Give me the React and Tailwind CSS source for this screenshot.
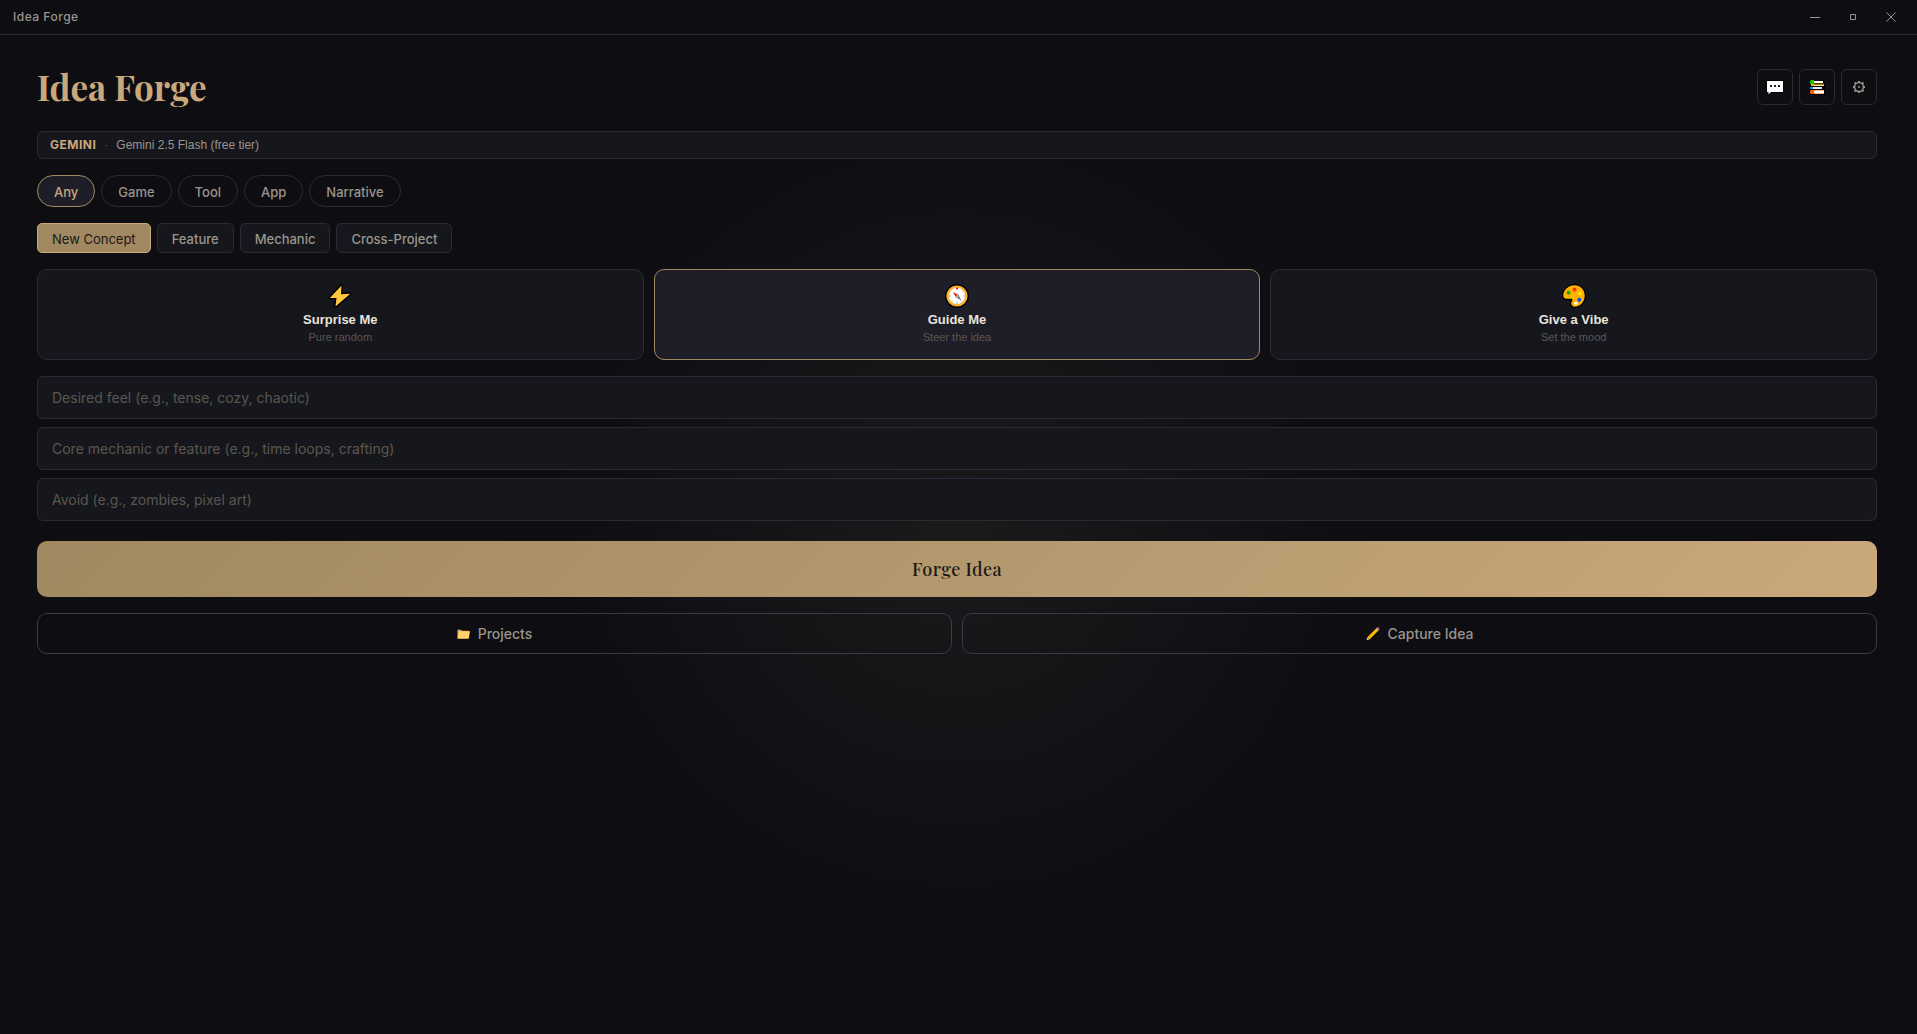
import { useState } from "react";

const CATEGORIES = ["Any", "Game", "Tool", "App", "Narrative"];
const IDEA_TYPES = ["New Concept", "Feature", "Mechanic", "Cross-Project"];

const FIELDS = [
  { id: "feel", placeholder: "Desired feel (e.g., tense, cozy, chaotic)" },
  { id: "mechanic", placeholder: "Core mechanic or feature (e.g., time loops, crafting)" },
  { id: "avoid", placeholder: "Avoid (e.g., zombies, pixel art)" },
];

function BoltIcon() {
  return (
    <svg width="24" height="24" viewBox="0 0 24 24" aria-hidden="true">
      <path
        d="M13.500 1.500 1.800 14H8.500L7.500 22.500 22.300 9.800 13 10.200Z"
        fill="#ffc83d"
        stroke="#000"
        strokeWidth="3"
        strokeLinejoin="round"
        paintOrder="stroke"
      />
    </svg>
  );
}

function CompassIcon() {
  return (
    <svg width="24" height="24" viewBox="0 0 24 24" aria-hidden="true">
      <circle cx="12" cy="12" r="12" fill="#000" />
      <circle cx="12" cy="12" r="9.4" fill="#fff" stroke="#f8b02c" strokeWidth="2.4" />
      <g fill="#9aa0a6">
        <circle cx="12" cy="19" r=".8" />
        <circle cx="5" cy="12" r=".8" />
        <circle cx="19" cy="12" r=".8" />
        <circle cx="7" cy="17" r=".5" />
        <circle cx="17" cy="7" r=".5" />
        <circle cx="17" cy="17" r=".5" />
      </g>
      <circle cx="12" cy="4.6" r="1.1" fill="#e81224" />
      <path d="M8 8 13.5 11 11 13.5Z" fill="#e81224" />
      <path d="M16.5 16.5 13.5 11 11 13.5Z" fill="#767676" />
      <circle cx="12.2" cy="12.2" r="1" fill="#ccc" />
    </svg>
  );
}

function PaletteIcon() {
  return (
    <svg width="24" height="24" viewBox="0 0 24 24" aria-hidden="true">
      <path
        d="M12.500 1.300C6.400 1.300 1.300 6 1.300 11.500c0 2.300 1.200 3.300 3.200 3.300h4.700c1.400 0 1.700 1 .9 2.200-1.700 2.600-.6 5.700 2.700 5.700 5.500 0 9.900-4.900 9.900-10.900S18.500 1.300 12.500 1.300Z"
        fill="#ffb000"
        stroke="#000"
        strokeWidth="2.6"
        paintOrder="stroke"
      />
      <circle cx="12.500" cy="5.500" r="2" fill="#f03a17" />
      <circle cx="6.500" cy="8.800" r="2" fill="#16a810" />
      <circle cx="18" cy="9.500" r="2" fill="#ffe000" />
      <circle cx="17.300" cy="15.800" r="2" fill="#0a50e8" />
      <circle cx="13.800" cy="19.200" r="1.700" fill="#fff" />
    </svg>
  );
}

function ChatIcon() {
  return (
    <svg width="18" height="16" viewBox="0 0 18 16" aria-hidden="true">
      <path
        d="M1 2h16v11H5l-2.500 2.500V13H1Z"
        fill="#fff"
        stroke="#000"
        strokeWidth="1.500"
        strokeLinejoin="round"
        paintOrder="stroke"
      />
      <path d="M4 6h2v2H4zM8 6h2v2H8zM12 6h2v2h-2z" fill="#222" />
    </svg>
  );
}

function BooksIcon() {
  return (
    <svg width="16" height="16" viewBox="0 0 16 16" aria-hidden="true">
      <path d="M1 1h14v3l1 1v3l-1 2 1 1v5H0V7l1-2Z" fill="#000" />
      <path d="M2 1h3v4H1V2z" fill="#16c60c" />
      <path d="M5 2h9v2H5z" fill="#fff" />
      <path d="M2 4.500h13v1.500H2z" fill="#a08000" />
      <path d="M2 5h3v2H2z" fill="#f7b500" />
      <path d="M5 6h10v1H5z" fill="#f5e8b0" />
      <path d="M1 8h3v2H1z" fill="#2f8ae8" />
      <path d="M4 8h9v2H4z" fill="#dcecfa" />
      <path d="M2 11h13v4H2l-1-1v-2z" fill="#f7630c" />
      <path d="M6 11.500h9v3H6l-1-1v-1z" fill="#fff" />
    </svg>
  );
}

function GearIcon() {
  return (
    <svg width="14" height="14" viewBox="0 0 14 14" fill="none" stroke="#9a958c" aria-hidden="true">
      <circle cx="7" cy="7" r="4.400" strokeWidth="1.500" />
      <circle cx="7" cy="7" r="1" fill="#9a958c" stroke="none" />
      <path
        d="M7 1v1.500M7 11.500V13M1 7h1.500M11.500 7H13M2.500 2.500l1.200 1.200M10.300 10.300l1.200 1.200M2.500 11.500l1.200-1.200M10.300 3.700l1.200-1.200"
        strokeWidth="1.800"
      />
    </svg>
  );
}

function FolderIcon() {
  return (
    <svg width="13" height="12" viewBox="0 0 14 12" aria-hidden="true">
      <path d="M0 1h5l1 1h8v3H0z" fill="#000" />
      <path d="M.5 1.500h4l1 1h7.500V10H.5z" fill="#e8a33d" />
      <path d="M.5 1.500h3v1h-3z" fill="#4cc2e8" />
      <path d="M2 3h12l-1.500 8H.5z" fill="#ffd268" />
    </svg>
  );
}

function PencilIcon() {
  return (
    <svg width="14" height="15" viewBox="0 0 14 15" aria-hidden="true">
      <path d="M0 14.500 1 11 10.500 1.500 13.500 4 4 13.500Z" fill="#000" />
      <path d="M.5 14 1.300 11.200 3.500 13.400Z" fill="#e8d8c0" />
      <path d="M1.300 11.200 9.800 2.700l2.200 2.200-8.500 8.500Z" fill="#ffb900" />
      <path d="M9.800 2.700l1-1 2.200 2.200-1 1Z" fill="#ddd" />
      <path d="M10.800 1.700l1-1 2.200 2.200-1 1Z" fill="#e8405a" />
    </svg>
  );
}

const MODES = [
  { id: "surprise", title: "Surprise Me", hint: "Pure random", Icon: BoltIcon },
  { id: "guide", title: "Guide Me", hint: "Steer the idea", Icon: CompassIcon },
  { id: "vibe", title: "Give a Vibe", hint: "Set the mood", Icon: PaletteIcon },
];

const TOOLS = [
  { label: "Chat", Icon: ChatIcon },
  { label: "Library", Icon: BooksIcon },
  { label: "Settings", Icon: GearIcon },
];

function TitleBar() {
  return (
    <div className="flex h-[35px] items-center justify-between border-b border-[#2a2a35] pr-2.5 pl-[13px] text-[#9a958c]">
      <span className="text-xs font-medium tracking-[0.5px]">Idea Forge</span>
      <div className="flex gap-1.5">
        <button aria-label="Minimize" className="flex h-7 w-8 items-center justify-center">
          <svg width="10" height="10" stroke="currentColor" aria-hidden="true">
            <path d="M0 5.500h10" />
          </svg>
        </button>
        <button aria-label="Maximize" className="flex h-7 w-8 items-center justify-center">
          <svg width="6" height="6" fill="none" stroke="currentColor" aria-hidden="true">
            <path d="M.5 .5h5v5h-5z" />
          </svg>
        </button>
        <button aria-label="Close" className="flex h-7 w-8 items-center justify-center">
          <svg width="10" height="10" stroke="currentColor" aria-hidden="true">
            <path d="M.5 .5l9 9M9.500 .5l-9 9" />
          </svg>
        </button>
      </div>
    </div>
  );
}

export default function App() {
  const [category, setCategory] = useState("Any");
  const [ideaType, setIdeaType] = useState("New Concept");
  const [mode, setMode] = useState("guide");

  return (
    <div className="min-h-screen bg-[#0d0d12] bg-[radial-gradient(circle_at_50%_50%,rgba(201,168,124,0.08)_0,rgba(201,168,124,0)_420px)] font-['Inter',sans-serif] text-[#e8e4dc]">
      <TitleBar />

      <main className="flex flex-col gap-4 pt-[34px] pr-10 pb-10 pl-[37px]">
        <header className="mb-2.5 flex h-9 items-center justify-between">
          <h1 className="font-['Playfair_Display','Liberation_Serif',serif] text-[35px] leading-9 font-bold text-[#c9a87c]">
            Idea Forge
          </h1>
          <div className="flex gap-1.5">
            {TOOLS.map(({ label, Icon }) => (
              <button
                key={label}
                aria-label={label}
                className="flex size-9 items-center justify-center rounded-md border border-[#2a2a35]"
              >
                <Icon />
              </button>
            ))}
          </div>
        </header>

        {/* Active provider */}
        <div className="flex h-7 items-center gap-2 rounded-md border border-[#2a2a35] bg-[#16171c] px-3 font-['Liberation_Sans',sans-serif] text-xs text-[#9a958c]">
          <span className="font-['Inter',sans-serif] font-bold tracking-[0.5px] text-[#c9a87c]">GEMINI</span>
          <span className="text-[#5a5650]">·</span>
          <span>Gemini 2.5 Flash (free tier)</span>
        </div>

        <div className="flex gap-1.5">
          {CATEGORIES.map((name) => (
            <button
              key={name}
              onClick={() => setCategory(name)}
              className={`h-8 rounded-full border px-4 pt-px text-[13px] leading-5 font-medium ${
                category === name
                  ? "border-[#a08960] bg-[#1e1e28] text-[#c9a87c]"
                  : "border-[#2a2a35] text-[#9a958c]"
              }`}
            >
              {name}
            </button>
          ))}
        </div>

        <div className="flex gap-1.5">
          {IDEA_TYPES.map((name) => (
            <button
              key={name}
              onClick={() => setIdeaType(name)}
              className={`h-[30px] rounded-[5px] border px-3.5 pt-px text-[13px] leading-5 ${
                ideaType === name
                  ? "border-[#c9a87c] bg-[#a08960] text-[#1a1816]"
                  : "border-[#2a2a35] bg-[#16171c] font-medium text-[#9a958c]"
              }`}
            >
              {name}
            </button>
          ))}
        </div>

        <div className="grid grid-cols-3 gap-2.5">
          {MODES.map(({ id, title, hint, Icon }) => (
            <button
              key={id}
              onClick={() => setMode(id)}
              className={`flex h-[91px] flex-col items-center rounded-[10px] border pt-3.5 font-['Liberation_Sans',sans-serif] ${
                mode === id ? "border-[#a08960] bg-[#1e1e28]" : "border-[#2a2a35] bg-[#16171c]"
              }`}
            >
              <Icon />
              <span className="mt-[3px] text-[13px] leading-[18px] font-bold">{title}</span>
              <span className="text-[11px] leading-4 text-[#5a5650]">{hint}</span>
            </button>
          ))}
        </div>

        <div className="mb-1 flex flex-col gap-2">
          {FIELDS.map(({ id, placeholder }) => (
            <input
              key={id}
              id={id}
              type="text"
              aria-label={placeholder}
              placeholder={placeholder}
              className="h-[43px] w-full rounded-md border border-[#2a2a35] bg-[#16171c] px-3.5 text-sm outline-none placeholder:text-[#5a5650]"
            />
          ))}
        </div>

        <button className="h-14 rounded-[10px] bg-linear-135 from-[#a08960] to-[#c9a87c] font-['Playfair_Display','Liberation_Serif',serif] text-lg font-medium tracking-wide text-[#1a1816]">
          Forge Idea
        </button>

        <div className="grid grid-cols-2 gap-2.5">
          <button className="flex h-[41px] items-center justify-center gap-2 rounded-[10px] border border-[#3a3a48] text-sm font-medium text-[#9a958c]">
            <FolderIcon />
            Projects
          </button>
          <button className="flex h-[41px] items-center justify-center gap-2 rounded-[10px] border border-[#3a3a48] text-sm font-medium text-[#9a958c]">
            <PencilIcon />
            Capture Idea
          </button>
        </div>
      </main>
    </div>
  );
}
